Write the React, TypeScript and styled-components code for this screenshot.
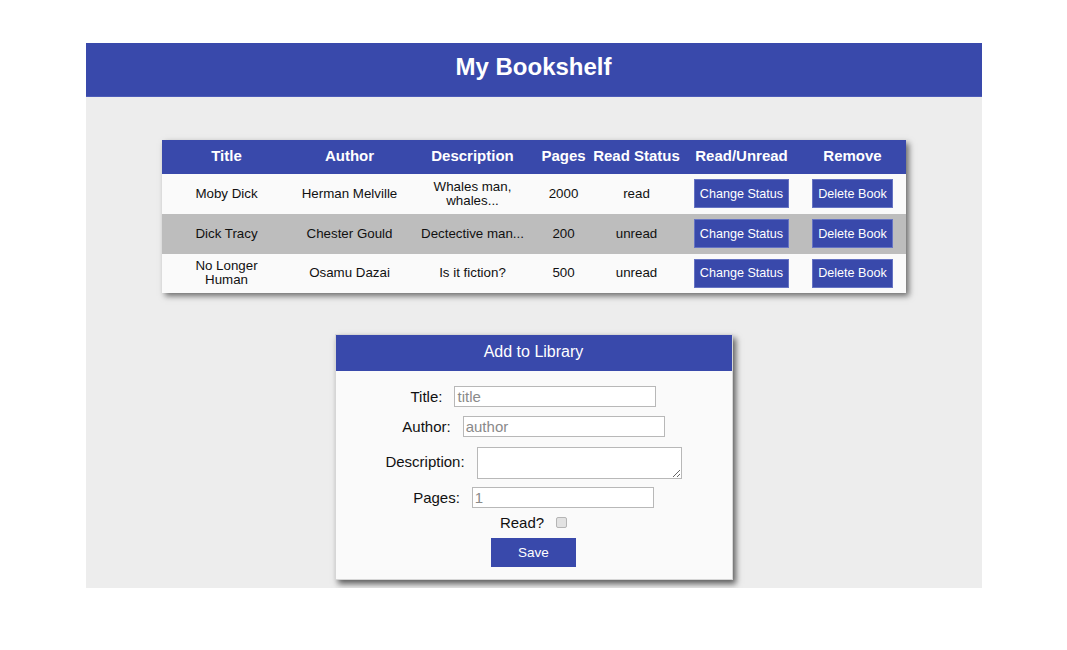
import React from "react";
import styled, { createGlobalStyle } from "styled-components";

const Global = createGlobalStyle`
  html, body { margin: 0; padding: 0; background: #ffffff; }
  body { font-family: "Liberation Sans", Arial, sans-serif; color: #111; }
  * { box-sizing: border-box; }
`;

const BLUE = "#3949ab";

const Page = styled.div`
  width: 896px;
  margin: 43px auto 0;
  background: #ededed;
  padding-bottom: 8px;
`;

const Header = styled.header`
  height: 54px;
  padding-bottom: 6px;
  background: ${BLUE};
  border-bottom: 1px solid #4d5cb8;
  display: flex;
  align-items: center;
  justify-content: center;
`;

const Heading = styled.h1`
  margin: 0;
  font-size: 24px;
  font-weight: bold;
  color: #fff;
`;

const Main = styled.main`
  display: flex;
  flex-direction: column;
  align-items: center;
  padding-top: 43px;
  gap: 41px;
`;

const Table = styled.table`
  width: 744px;
  border-collapse: collapse;
  table-layout: fixed;
  box-shadow: 3px 3px 6px rgba(0, 0, 0, 0.55);
`;

const HeadRow = styled.tr`
  height: 34px;
  background: ${BLUE};
`;

const Th = styled.th`
  color: #fff;
  font-size: 15px;
  font-weight: bold;
  text-align: center;
  padding: 0 2px 4px;
  white-space: nowrap;
`;

const Row = styled.tr<{ $alt?: boolean }>`
  height: ${(p) => (p.$alt ? "40px" : "39.5px")};
  background: ${(p) => (p.$alt ? "#bdbdbd" : "#fafafa")};
`;

const Td = styled.td<{ $pad?: number }>`
  font-size: 13.33px;
  line-height: 14px;
  text-align: center;
  vertical-align: middle;
  padding: 0 ${(p) => p.$pad ?? 4}px;
  color: #111;
`;

const ActionButton = styled.button`
  height: 29px;
  padding: 0 5px;
  white-space: nowrap;
  background: ${BLUE};
  color: #fff;
  border: 1px solid #6573c3;
  font-family: "Liberation Sans", Arial, sans-serif;
  font-size: 12.6px;
  cursor: pointer;
`;

const Card = styled.section`
  width: 398px;
  background: #fafafa;
  border: 1px solid #d6d6d6;
  box-shadow: 3px 4px 6px rgba(0, 0, 0, 0.6);
`;

const CardHeader = styled.div`
  height: 36px;
  padding-bottom: 3px;
  background: ${BLUE};
  color: #fff;
  font-size: 16px;
  display: flex;
  align-items: center;
  justify-content: center;
`;

const Form = styled.form`
  display: flex;
  flex-direction: column;
  align-items: center;
  padding: 15px 0 12px;
`;

const FieldRow = styled.div<{ $mt?: number }>`
  display: flex;
  align-items: center;
  gap: 12px;
  margin-top: ${(p) => p.$mt ?? 0}px;
`;

const Label = styled.label<{ $lift?: number }>`
  font-size: 15px;
  color: #111;
  margin-bottom: ${(p) => p.$lift ?? 0}px;
`;

const TextInput = styled.input<{ $w: number }>`
  width: ${(p) => p.$w}px;
  height: 21px;
  padding: 0 2px;
  border: 1px solid #b8b8b8;
  background: #fff;
  font-family: "Liberation Sans", Arial, sans-serif;
  font-size: 15px;
  &::placeholder { color: #8a8a8a; }
  &::-webkit-inner-spin-button, &::-webkit-outer-spin-button { -webkit-appearance: none; margin: 0; }
`;

const TextArea = styled.textarea`
  width: 205px;
  height: 32px;
  border: 1px solid #b8b8b8;
  background: #fff;
  font-family: "Liberation Sans", Arial, sans-serif;
  font-size: 15px;
`;

const Check = styled.input`
  appearance: none;
  -webkit-appearance: none;
  width: 11px;
  height: 11px;
  margin: 0;
  border: 1px solid #b5b5b5;
  border-radius: 2px;
  background: #e2e2e2;
`;

const SaveButton = styled.button`
  width: 85px;
  height: 29px;
  margin-top: 7px;
  background: ${BLUE};
  color: #fff;
  border: none;
  font-family: "Liberation Sans", Arial, sans-serif;
  font-size: 13.5px;
  cursor: pointer;
`;

const books = [
  { title: "Moby Dick", author: "Herman Melville", desc: "Whales man, whales...", pages: 2000, status: "read" },
  { title: "Dick Tracy", author: "Chester Gould", desc: "Dectective man...", pages: 200, status: "unread" },
  { title: "No Longer Human", author: "Osamu Dazai", desc: "Is it fiction?", pages: 500, status: "unread" },
];

const widths = [130, 116, 130, 52, 94, 116, 106];

export default function App() {
  return (
    <>
      <Global />
      <Page>
        <Header>
          <Heading>My Bookshelf</Heading>
        </Header>
        <Main>
          <Table>
            <colgroup>
              {widths.map((w, i) => (
                <col key={i} style={{ width: w }} />
              ))}
            </colgroup>
            <thead>
              <HeadRow>
                <Th>Title</Th>
                <Th>Author</Th>
                <Th>Description</Th>
                <Th>Pages</Th>
                <Th>Read Status</Th>
                <Th>Read/Unread</Th>
                <Th>Remove</Th>
              </HeadRow>
            </thead>
            <tbody>
              {books.map((b, i) => (
                <Row key={b.title} $alt={i === 1}>
                  <Td $pad={12}>{b.title}</Td>
                  <Td>{b.author}</Td>
                  <Td $pad={8}>{b.desc}</Td>
                  <Td>{b.pages}</Td>
                  <Td>{b.status}</Td>
                  <Td $pad={0}>
                    <ActionButton type="button">Change Status</ActionButton>
                  </Td>
                  <Td $pad={0}>
                    <ActionButton type="button">Delete Book</ActionButton>
                  </Td>
                </Row>
              ))}
            </tbody>
          </Table>
          <Card>
            <CardHeader>Add to Library</CardHeader>
            <Form onSubmit={(e) => e.preventDefault()}>
              <FieldRow>
                <Label>Title:</Label>
                <TextInput $w={202} placeholder="title" />
              </FieldRow>
              <FieldRow $mt={9}>
                <Label>Author:</Label>
                <TextInput $w={202} placeholder="author" />
              </FieldRow>
              <FieldRow $mt={10}>
                <Label $lift={4}>Description:</Label>
                <TextArea />
              </FieldRow>
              <FieldRow $mt={8}>
                <Label>Pages:</Label>
                <TextInput $w={182} type="number" placeholder="1" />
              </FieldRow>
              <FieldRow $mt={6}>
                <Label>Read?</Label>
                <Check type="checkbox" />
              </FieldRow>
              <SaveButton type="submit">Save</SaveButton>
            </Form>
          </Card>
        </Main>
      </Page>
    </>
  );
}
